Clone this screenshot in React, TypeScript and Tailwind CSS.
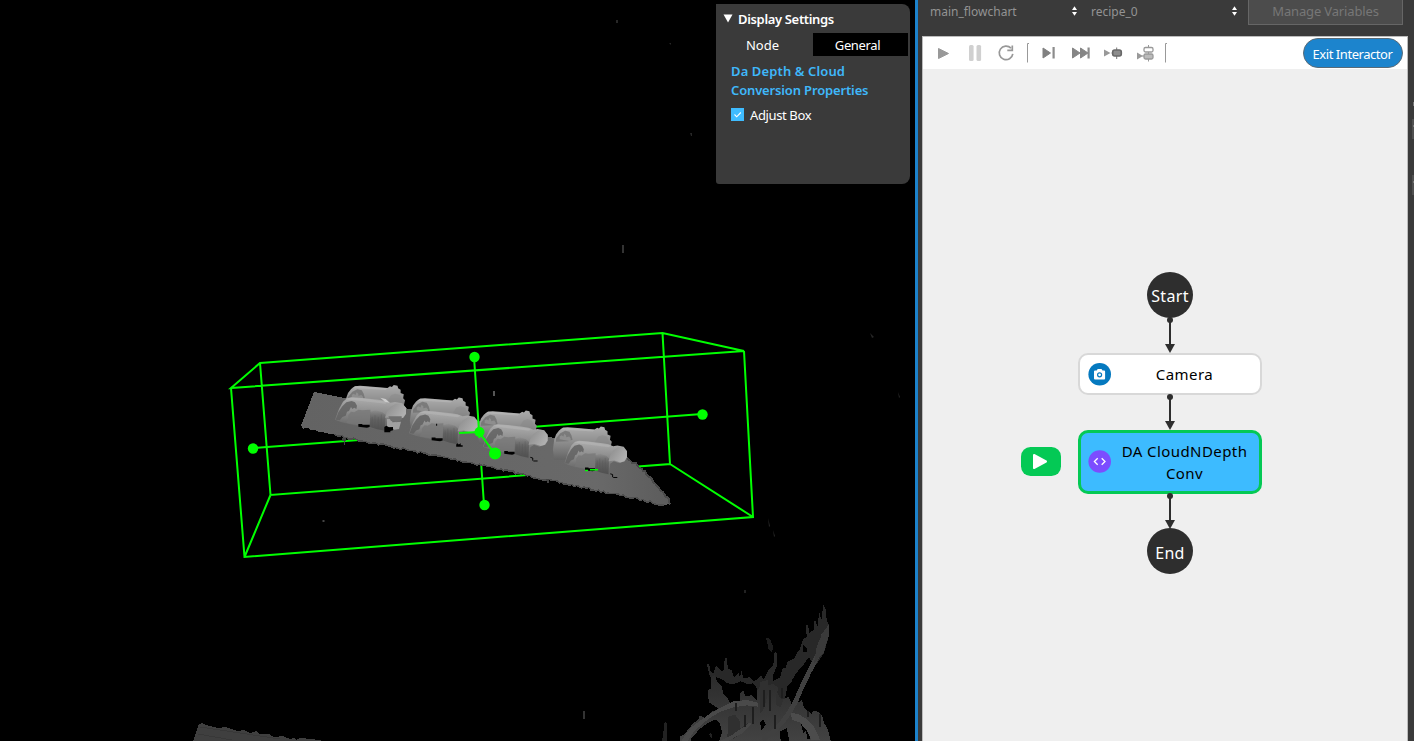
import React from "react";

const FONT = "font-['Noto_Sans','Open_Sans',sans-serif]";

/* Polyline with a small repeatable roughness, used for scan edges. */
function rough(points: number[][], amp: number, step: number): string {
  const out: string[] = [];
  let seed = 7;
  for (let i = 0; i < points.length - 1; i++) {
    const [x0, y0] = points[i];
    const [x1, y1] = points[i + 1];
    const n = Math.max(1, Math.round(Math.hypot(x1 - x0, y1 - y0) / step));
    for (let k = 0; k < n; k++) {
      seed = (seed * 16807) % 2147483647;
      const j = (seed / 2147483647 - 0.5) * amp;
      out.push(`${(x0 + ((x1 - x0) * k) / n).toFixed(1)},${(y0 + ((y1 - y0) * k) / n + j).toFixed(1)}`);
    }
  }
  const last = points[points.length - 1];
  out.push(`${last[0]},${last[1]}`);
  return out.join(" ");
}

const SLAB_BOTTOM = rough([[301, 427], [344, 437], [413, 451], [482, 465], [547, 480], [633, 498], [655, 503], [664, 505]], 2.4, 2.5);
const SLAB_RIGHT = rough([[670, 504], [669, 500], [655, 483], [640, 467], [626, 457]], 3, 2.5);

function BackPart({ x, y, w = 1 }: { x: number; y: number; w?: number }) {
  return (
    <g transform={`translate(${x} ${y}) scale(${w / 3} 0.3333)`}>
      <path fill="url(#backShade)" d="M-6 40 L0 24 10 12 22 4 38 2 60 4 126 9 134 4 140 6 146 0 158 2 160 10 168 14 168 24 178 28 176 40 182 46 178 62 180 72 172 90 60 100 -6 100 -10 70z" />
      <path fill="#727272" opacity="0.8" d="M0 36 L14 20 30 13 44 16 50 26 54 40 40 44 0 46z" />
      <path fill="#8e8e8e" d="M12 38 v-8 l6 -4 6 4 3 -8 6 4 v6 l10 -2 5 6 v8z" />
      <path fill="#bebebe" opacity="0.5" d="M12 10 L24 3 128 10 120 15 26 10z" />
      <path fill="#858585" d="M128 46 L138 30 152 26 166 30 174 48 172 64 150 60z" opacity="0.4" />
    </g>
  );
}

function FrontPart({ x, y, w = 1, kind = 0 }: { x: number; y: number; w?: number; kind?: number }) {
  return (
    <g transform={`translate(${x} ${y}) scale(${w / 3} 0.3333)`}>
      <path fill="url(#frontShade)" d="M0 68 L6 52 12 36 24 14 36 4 50 1 80 3 130 8 150 11 166 17 180 15 202 19 213 32 213 50 206 62 186 68 168 62 156 70 152 104 122 97 96 91 54 84 20 76z" />
      <path fill="#616161" opacity="0.85" d="M2 68 L10 46 22 28 34 16 50 12 60 16 66 26 64 36 58 32 52 36 48 30 42 42 36 44 32 56 22 60 14 70z" />
      <path fill="#777" opacity="0.75" d="M34 78 L40 62 40 54 48 44 58 46 70 38 82 40 106 38 108 84 66 84z" />
      <path fill="url(#shadow)" d="M106 44 L122 40 142 46 152 54 150 101 126 97 104 90z" />
      <path stroke="#555" strokeWidth="2" fill="none" opacity="0.5" d="M112 60 v28 M120 54 v38 M130 60 v34 M139 52 v44" />
      <path fill="url(#cap)" d="M150 62 L156 44 166 30 182 20 200 20 213 32 213 50 204 62 190 66 170 60z" />
      <path fill="#b8b8b8" opacity="0.5" d="M34 6 L48 2 80 4 158 14 152 20 50 9z" />
      <path fill="#000" d="M70 81 h12 v2 h22 v7 l-8 2 -26 -3z" />
      {kind === 0 && (
        <>
          <path fill="#a0a0a0" d="M156 66 h16 v10 l26 -2 -6 22 -14 2 -10 -8 h-12z" />
          <path fill="#707070" d="M160 58 h40 v10 l-14 8 -18 -4z" />
          <path fill="#000" d="M148 90 l6 -4 8 5 12 -1 v10 l-8 2 v4 h-18z" />
          <path fill="#dcdcdc" opacity="0.8" d="M136 2 l16 4 12 11 -14 -3z" />
        </>
      )}
      {kind === 1 && <path fill="#000" d="M146 102 l4 -4 4 4 6 -4 v6 h6 v5 h-20z M84 40 h3 v6 h-3z" />}
      {kind === 2 && <path fill="none" stroke="#000" strokeWidth="3" d="M156 100 l8 2 v8 M166 111 h14" />}
    </g>
  );
}

function PointCloud() {
  return (
    <svg width="915" height="741" viewBox="0 0 915 741" className="block">
      <defs>
        <linearGradient id="backShade" x1="0" y1="0" x2="0" y2="1">
          <stop offset="0" stopColor="#adadad" />
          <stop offset="0.45" stopColor="#8f8f8f" />
          <stop offset="1" stopColor="#646464" />
        </linearGradient>
        <linearGradient id="frontShade" x1="0.5" y1="0" x2="0.42" y2="1">
          <stop offset="0" stopColor="#aeaeae" />
          <stop offset="0.4" stopColor="#909090" />
          <stop offset="0.8" stopColor="#6c6c6c" />
          <stop offset="1" stopColor="#646464" />
        </linearGradient>
        <linearGradient id="shadow" x1="0" y1="0" x2="0" y2="1">
          <stop offset="0" stopColor="#666" stopOpacity="0.1" />
          <stop offset="0.5" stopColor="#606060" />
          <stop offset="1" stopColor="#505050" />
        </linearGradient>
        <linearGradient id="cap" x1="0" y1="0" x2="1" y2="0.5">
          <stop offset="0" stopColor="#8a8a8a" />
          <stop offset="1" stopColor="#b0b0b0" />
        </linearGradient>
        <linearGradient id="slab" x1="0" y1="0" x2="1" y2="0">
          <stop offset="0" stopColor="#636363" />
          <stop offset="0.8" stopColor="#696969" />
          <stop offset="1" stopColor="#5c5c5c" />
        </linearGradient>
        <linearGradient id="debris" x1="0" y1="0" x2="0" y2="1">
          <stop offset="0" stopColor="#2b2b2b" />
          <stop offset="1" stopColor="#424242" />
        </linearGradient>
      </defs>

      <g fill="none" stroke="#00ff00" strokeWidth="2">
        <path d="M260 363 L662.500 333 L744 351 L231 388 Z M231 388 L244.500 557 L753 517 L744 351 M260 363 L270.500 495 L670 464 L662.500 333 M270.500 495 L244.500 557 M670 464 L753 517" />
        <path d="M253 448 L702 414 M479 432 L484 505" />
      </g>

      <g shapeRendering="crispEdges">
        <polygon fill="url(#slab)" points={`314,392 345,398 410,409 480,421 550,437 626,457 ${SLAB_RIGHT.split(" ").reverse().join(" ")} 670,504 664,505 ${SLAB_BOTTOM.split(" ").reverse().join(" ")}`} />
        <polyline fill="none" stroke="#4f4f4f" strokeWidth="1.500" points={SLAB_BOTTOM.split(" ").slice(14).join(" ")} />
        <polyline fill="none" stroke="#4b4b4b" strokeWidth="2" points={SLAB_RIGHT} />
        <path fill="#444" d="M342 438 h4 v3 h-1 v4 h-1 v-4 h-2z M546 479 h3 v4 h-2z" />
      </g>
      <g>
        <BackPart x={348} y={385} w={0.94} />
        <FrontPart x={335} y={397} />
        <BackPart x={413} y={397.500} w={0.94} />
        <FrontPart x={409} y={410.500} w={0.97} kind={1} />
        <BackPart x={481} y={410.500} w={0.92} />
        <FrontPart x={483} y={424} w={0.91} kind={2} />
        <BackPart x={556} y={426.500} w={0.92} />
        <FrontPart x={564.500} y={440.500} w={0.88} kind={2} />
        <path stroke="#00ff00" strokeWidth="1.500" d="M585 470.500 h3 M590 469.700 h8" />
      </g>

      <g shapeRendering="crispEdges">
        <g transform="translate(660 590) scale(0.33333)">
          <path fill="#282828" d="M140 222 L148 224 152 246 160 250 168 226 178 236 184 244 192 240 194 204 200 204 204 236 214 240 222 262 236 250 240 262 244 242 250 264 268 262 280 274 294 266 302 256 312 268 326 240 340 224 344 184 352 190 352 226 338 258 340 272 352 266 360 264 368 234 376 236 382 216 402 206 410 190 420 178 428 150 440 140 438 104 444 106 448 130 462 118 462 92 468 94 472 112 478 66 484 90 490 44 498 60 500 90 507 104 506 140 492 190 470 222 452 236 436 216 426 240 406 252 396 276 382 290 372 340 340 380 300 390 290 330 292 296 280 280 262 282 242 274 222 282 200 280 190 270 170 262 150 262z" />
          <path fill="#000" d="M410 248 L432 222 446 202 456 214 444 240 424 270 410 296 398 300 396 270z M430 166 l10 10 v10 h-10z" />
          <path fill="url(#debris)" d="M154 262 L164 254 172 276 184 286 190 310 204 326 212 346 232 346 240 336 240 312 250 302 256 318 274 316 290 330 292 300 308 280 320 286 340 282 356 294 350 310 366 330 386 320 396 346 412 340 426 330 432 352 454 372 462 362 476 366 486 376 492 398 504 420 512 452 H60 L60 430 78 412 114 390 120 376 134 384 154 366 176 356 160 346 146 336 144 300 154 296z" />
          <path fill="#4a4a4a" d="M65 452 L78 432 94 412 118 394 148 372 188 350 220 334 260 330 294 338 294 350 260 346 220 352 180 366 146 386 118 410 98 430 84 452z" />
          <path fill="#000" d="M92 448 L120 416 148 396 168 388 180 402 186 426 178 452 H92z M60 420 l24 -18 30 -20 -40 50 -14 8z M360 424 l20 -10 8 38 h-26z M420 392 l8 -4 8 10 8 -8 6 22 v36 h-8 l-4 -28 -8 10z M300 396 l10 -8 8 16 -14 16z" />
          <path fill="#303030" d="M205 380 L225 374 240 394 240 416 262 400 272 406 222 446 200 448 204 424z M300 276 L324 270 324 310 312 356 300 372z M350 302 l8 20 12 8 -8 22 -14 -8z" />
          <path fill="#464646" d="M182 452 L214 436 240 418 268 398 274 402 248 430 224 442 206 452z" />
          <path fill="none" stroke="#404040" strokeWidth="14" d="M308 450 Q370 408 406 336 Q430 278 464 214 Q488 170 492 130" />
          <path fill="#3a3a3a" d="M488 128 L506 104 506 140 490 190 462 220 470 170z" />
          <path fill="#1d1d1d" d="M318 144 l12 2 10 26 -4 14 -10 -8z" />
          <path fill="#4c4c4c" d="M392 368 L414 372 438 386 460 406 472 430 480 450 H454 L442 424 420 398 396 390z" />
          <path fill="#222" d="M6 452 l4 -24 4 -32 6 2 2 54z M148 434 l6 -6 2 20z M252 0 h5 v10 h-4z" />
          <path stroke="#1e1e1e" strokeWidth="6" fill="none" d="M280 352 v50 M312 300 v52 M330 300 v62 M256 374 v36 M366 294 v30 M344 376 v42 M480 372 v40 M444 362 v20 M228 340 v22" />
        </g>

        <path fill="#3f3f3f" d="M193 741 L199 724 202 723 206 725 218 728 225 727 237 731 244 730 250 733 256 731 260 734 269 734 274 737 283 736 290 739 294 738 296 740 300 738 312 739 324 741z" />
        <path stroke="#383838" fill="none" d="M200 727 L280 739 M198 734 L232 740" />
      </g>

      <g fill="#272727">
        <rect x="616" y="20" width="2" height="3" />
        <rect x="622" y="245" width="2" height="8" fill="#333" />
        <rect x="493" y="391" width="2" height="5" fill="#555" />
        <rect x="322.500" y="520" width="2" height="2" fill="#444" />
        <rect x="583" y="711" width="2" height="8" fill="#333" />
        <path d="M768 518 l2 8 -1 1 M773 530 l2 6 -1 1z M684 97 l3 2z M690 133 h2 v3 h-1z M669 43 h2 v2z M870 333 l4 4 -2 1z M898 392 l2 5 -1 1z" />
      </g>

      <g fill="#00ff00" stroke="none">
        <path fill="none" stroke="#00ff00" strokeWidth="2" d="M474 357 L479.500 438 M459 433 L479 432 L495 454" />
        <circle cx="474.500" cy="357" r="5.200" />
        <circle cx="253" cy="448.500" r="5.200" />
        <circle cx="702.500" cy="414.500" r="5.200" />
        <circle cx="484.500" cy="505" r="5.200" />
        <circle cx="479.500" cy="432" r="5" />
        <circle cx="495" cy="453.500" r="6" />
      </g>
    </svg>
  );
}

function SettingsPanel() {
  return (
    <section className="absolute left-[716px] top-[4px] flex h-[180px] w-[194px] flex-col rounded-r-[8px] rounded-bl-[3px] bg-[#3a3a3a] text-[13px] text-white">
      <header className="flex h-[29px] items-center pl-[7px] font-semibold">
        <svg width="10" height="9" className="mr-[5px] -mt-px"><path d="M0.500 0.500 h9 L5 8.500z" fill="#fff" /></svg>
        <span className="pt-[2px] tracking-[-0.34px]">Display Settings</span>
      </header>
      <div className="flex h-[23px] pr-[2px] text-center leading-[24px]">
        <span className="w-[97px] pr-1">Node</span>
        <span className="flex-1 bg-black pr-[6px] tracking-[-0.35px]">General</span>
      </div>
      <h2 className="mt-[6px] pl-[15px] font-semibold leading-[19px] text-[#3fb8fa]">
        <span className="tracking-[0.12px]">Da Depth &amp; Cloud</span><br /><span className="tracking-[-0.15px]">Conversion Properties</span>
      </h2>
      <label className="mt-[5px] flex h-[20px] items-center pl-[15px]">
        <svg width="13" height="13" className="mr-[6px] -mt-px"><rect width="13" height="13" fill="#3fbcff" /><path d="M3.500 6.500 L5.700 8.800 L9.800 4.500" stroke="#fff" strokeWidth="1.100" fill="none" /></svg>
        <span className="mt-px tracking-[-0.38px]">Adjust Box</span>
      </label>
    </section>
  );
}

function UpDown() {
  return (
    <svg width="5" height="10" className="-mt-[2px]"><path d="M0 4 L2.500 0.200 L5 4z M0 6 h5 L2.500 9.800z" fill="#fff" /></svg>
  );
}

function Toolbar() {
  return (
    <div className="flex h-[32px] items-center justify-between bg-white pr-[4px]">
      <svg width="260" height="32" viewBox="923 37 260 32">
        <path d="M938.500 48.500 L948.500 53.500 L938.500 58.500z" fill="#999" stroke="#999" strokeLinejoin="round" />
        <rect x="969" y="45" width="4.600" height="16" rx="1.500" fill="#d0d0d0" />
        <rect x="976.500" y="45" width="4.600" height="16" rx="1.500" fill="#d0d0d0" />
        <path d="M1011 48.200 A6.800 6.800 0 1 0 1012.800 53.800" fill="none" stroke="#989898" strokeWidth="1.700" />
        <path d="M1012.300 45.500 V50.300 H1007.300" fill="none" stroke="#989898" strokeWidth="1.700" />
        <path d="M1029 43.500 H1027.500 V62.500 M1167 43.500 H1165.500 V62.500" fill="none" stroke="#999" />
        <path d="M1043 48 L1050.500 53 L1043 58z" fill="#808080" stroke="#808080" strokeLinejoin="round" />
        <rect x="1052.500" y="47" width="2.200" height="11.500" fill="#8c8c8c" />
        <path d="M1072.500 48 L1080 53 L1072.500 58z M1080.500 48 L1088 53 L1080.500 58z" fill="#858585" stroke="#858585" strokeLinejoin="round" />
        <rect x="1087.500" y="47.500" width="2.200" height="11" fill="#8c8c8c" />
        <path d="M1104 49.500 L1110.500 53 L1104 56.500z" fill="#999" />
        <path d="M1116.700 47.500 V59 M1111.500 53 H1122" stroke="#777" />
        <rect x="1112.700" y="50" width="8.600" height="6" rx="2" fill="#8c8c8c" stroke="#686868" strokeWidth="1.600" />
        <path d="M1137 52.500 L1143 56 L1137 59.500z" fill="#999" />
        <path d="M1148.500 45 V61.500 M1142 56 H1153" stroke="#999" />
        <rect x="1144" y="47.500" width="9" height="4.500" rx="1.500" fill="#fff" stroke="#999" strokeWidth="1.300" />
        <rect x="1144" y="54" width="9" height="5" rx="1.500" fill="#bbb" stroke="#999" strokeWidth="1.300" />
      </svg>
      <button className="h-[30px] w-[100px] rounded-full border border-[#596b78] bg-[#1c84cd] pt-[3px] pr-px text-[13px] tracking-[-0.45px] text-white">Exit Interactor</button>
    </div>
  );
}

function Arrow({ top, length }: { top: number; length: number }) {
  return (
    <svg className="absolute left-[241px]" style={{ top }} width="12" height={length}>
      <circle cx="6" cy="3" r="3" fill="#2e2e2e" />
      <path d={`M6 3 V${length - 4}`} stroke="#2e2e2e" strokeWidth="2" />
      <path d={`M1 ${length - 9} H11 L6 ${length}z`} fill="#2e2e2e" />
    </svg>
  );
}

function FlowCanvas() {
  return (
    <div className="relative flex-1 bg-[#efefef] text-[16px]">
      <div className="absolute left-[224px] top-[203px] flex size-[46px] items-center justify-center rounded-full bg-[#2e2e2e] pt-px tracking-[0.35px] text-white">Start</div>
      <Arrow top={248} length={36} />
      <div className="absolute left-[155px] top-[284px] flex h-[42px] w-[184px] items-center rounded-[10px] border-2 border-[#d8d8d8] bg-white pl-[8px] text-[15px] tracking-[0.45px] text-black">
        <svg width="23" height="23" viewBox="0 0 23 23">
          <circle cx="11.700" cy="11.300" r="11.300" fill="#0579bf" />
          <path d="M7 7.500 h1.700 l1 -1.500 h3.800 l1 1.500 h1.600 q1 0 1 1 v7 q0 1 -1 1 h-9.100 q-1 0 -1 -1 v-7 q0 -1 1 -1z" fill="#fff" />
          <circle cx="11.600" cy="11.800" r="2" fill="#fff" stroke="#0579bf" strokeWidth="1.200" />
        </svg>
        <span className="w-[147px] text-center">Camera</span>
      </div>
      <Arrow top={325} length={36} />
      <svg className="absolute left-[98px] top-[378px]" width="40" height="29">
        <rect width="40" height="29" rx="9.500" fill="#04c955" />
        <path d="M13 8 L25 14.500 L13 21z" fill="#fff" stroke="#fff" strokeWidth="2" strokeLinejoin="round" />
      </svg>
      <div className="absolute left-[155px] top-[361px] flex h-[64px] w-[184px] items-center rounded-[10px] border-[3px] border-[#04c955] bg-[#3dbbff] pl-[7px] text-[15px] leading-[22px] tracking-[0.42px] text-black">
        <svg width="23" height="23" viewBox="0 0 23 23" className="-mt-px">
          <circle cx="11.700" cy="11.500" r="11.300" fill="#7c4dff" />
          <path d="M9.700 8.200 L6.400 11.500 L9.700 14.800 M13.700 8.200 L17 11.500 L13.700 14.800" stroke="#fff" strokeWidth="1.300" fill="none" />
        </svg>
        <span className="w-[147px] text-center">DA CloudNDepth<br />Conv</span>
      </div>
      <Arrow top={424} length={36} />
      <div className="absolute left-[224px] top-[459px] flex size-[46px] items-center justify-center rounded-full bg-[#2e2e2e] pt-[3px] tracking-[0.3px] text-white">End</div>
    </div>
  );
}

export default function App() {
  return (
    <main className={`${FONT} flex h-[741px] w-[1414px] overflow-hidden bg-black`}>
      <div className="relative w-[915px] shrink-0">
        <PointCloud />
        <SettingsPanel />
      </div>
      <div className="w-[3px] shrink-0 bg-[#1c82cb]" />
      <div className="flex w-[496px] flex-col bg-[#3a3a3a] pl-[4px]">
        <div className="flex h-[36px] items-start text-[12px] text-[#939393]">
          <div className="flex h-[23px] w-[155px] items-center justify-between pl-[8px]"><span>main_flowchart</span><UpDown /></div>
          <div className="flex h-[23px] w-[160px] items-center justify-between pl-[14px]"><span>recipe_0</span><UpDown /></div>
          <div className="ml-[11px] flex h-[25px] w-[155px] items-center justify-center border border-t-0 border-[#666] bg-[#4c4c4c] text-[13px] tracking-[-0.15px] text-[#777]">Manage Variables</div>
        </div>
        <div className="flex w-[486px] flex-1 flex-col border-x border-t border-[#bcbcbc]">
          <Toolbar />
          <FlowCanvas />
        </div>
        <svg className="absolute left-[1411px] top-[100px]" width="3" height="100">
          <rect x="1" y="19" width="2" height="20" fill="#505050" />
          <rect x="1" y="75" width="2" height="20" fill="#505050" />
          <path d="M2 2 h1 v4 h-1z M2 25 h1 v2 h-1z M2 81 h1 v2 h-1z" fill="#777" />
        </svg>
      </div>
    </main>
  );
}
